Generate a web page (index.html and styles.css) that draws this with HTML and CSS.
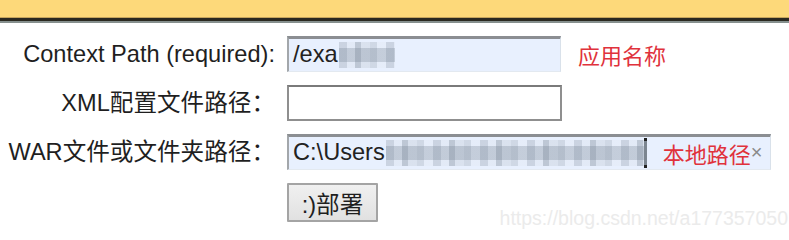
FILE: index.html
```html
<!DOCTYPE html>
<html lang="zh-CN">
<head>
<meta charset="utf-8">
<title>Deploy</title>
<link rel="stylesheet" href="styles.css">
</head>
<body>
<div class="topbar"></div>
<form class="deploy">
  <label class="label">Context Path (required):</label>
  <div class="cell">
    <div class="field field-filled field-short"><span class="val">/exa</span><span class="mosaic mosaic-a"></span></div>
    <span class="note note-after">应用名称</span>
  </div>

  <label class="label">XML配置文件路径：</label>
  <div class="cell">
    <div class="field field-empty field-short"></div>
  </div>

  <label class="label">WAR文件或文件夹路径：</label>
  <div class="cell">
    <div class="field field-filled field-long"><span class="val">C:\Users</span><span class="mosaic mosaic-b"></span><span class="caret"></span><span class="note note-inside">本地路径</span><span class="clear">×</span></div>
  </div>

  <span class="label"></span>
  <div class="cell">
    <button type="button" class="btn">:)部署</button>
  </div>
</form>
<div class="watermark">https://blog.csdn.net/a177357050</div>
</body>
</html>
```
FILE: styles.css
```css
html, body {
  margin: 0;
  padding: 0;
  background: #ffffff;
}
body {
  position: relative;
  width: 789px;
  height: 229px;
  overflow: hidden;
  font-family: "Liberation Sans", Arial, "Noto Sans CJK SC", sans-serif;
  font-size: 23.6px;
  color: #1f1f1f;
}
.topbar {
  height: 17px;
  background: #fdd97a;
  border-bottom: 1px solid #c6a55c;
  box-shadow: 0 3px 0 #2a2920, 0 5px 0 #86908e;
}
.deploy {
  display: grid;
  grid-template-columns: 275px 1fr;
  column-gap: 12px;
  row-gap: 13px;
  padding-top: 18px;
  align-items: center;
}
.label {
  text-align: right;
  white-space: nowrap;
  line-height: 36px;
}
.cell {
  display: flex;
  align-items: center;
}
.field {
  box-sizing: border-box;
  height: 36px;
  display: flex;
  align-items: center;
  padding-left: 4px;
  white-space: nowrap;
  overflow: hidden;
}
.field-short { width: 274px; }
.field-long { width: 484px; }
.field-filled {
  background: #e8f0fe;
  border-top: 3px solid #8b8e92;
  border-left: 2px solid #a3a7ab;
  border-right: 1px solid #d9e1ea;
  border-bottom: 1px solid #e3e9f0;
}
.field-empty {
  width: 275px;
  background: #ffffff;
  border: 2px solid #8f8f8f;
  border-top-color: #7a7a7a;
}
.val {
  color: #222222;
  line-height: 1;
}
.mosaic {
  display: inline-block;
  height: 26px;
  margin-left: 1px;
  background:
    linear-gradient(180deg, rgba(255,255,255,0) 0 6px, rgba(110,124,140,.28) 6px 20px, rgba(255,255,255,0) 20px),
    repeating-linear-gradient(90deg,
      rgba(140,150,164,.32) 0 8px,
      rgba(210,216,224,.25) 8px 16px,
      rgba(115,127,140,.36) 16px 22px,
      rgba(185,193,202,.3) 22px 31px,
      rgba(155,165,176,.32) 31px 38px,
      rgba(222,227,234,.25) 38px 47px);
}
.mosaic-a { width: 56px; }
.mosaic-b { width: 258px; }
.caret {
  display: inline-block;
  width: 3px;
  height: 30px;
  background: linear-gradient(180deg, #222 0 3px, #7b8590 3px 27px, #222 27px);
}
.note {
  color: #e0323c;
  font-family: "Noto Sans CJK SC", sans-serif;
  font-size: 22px;
  line-height: 1;
}
.note-after { margin-left: 17px; }
.note-inside { margin-left: 16px; }
.clear {
  color: #8a8a8a;
  font-size: 20px;
  line-height: 1;
  margin-left: 0;
  align-self: flex-start;
  margin-top: 5px;
}
.btn {
  box-sizing: border-box;
  width: 91px;
  height: 39px;
  margin: 0;
  padding: 0;
  font-family: "Liberation Sans", Arial, "Noto Sans CJK SC", sans-serif;
  font-size: 23.6px;
  color: #1f1f1f;
  background: linear-gradient(180deg, #f0f0f0, #e1e1e1);
  border: 2px solid #a4a4a4;
  border-radius: 1px;
}
.watermark {
  position: absolute;
  right: 1px;
  bottom: 1px;
  font-family: "Liberation Sans", Arial, sans-serif;
  font-size: 19.5px;
  line-height: 19px;
  color: #ebebeb;
  white-space: nowrap;
}
```
